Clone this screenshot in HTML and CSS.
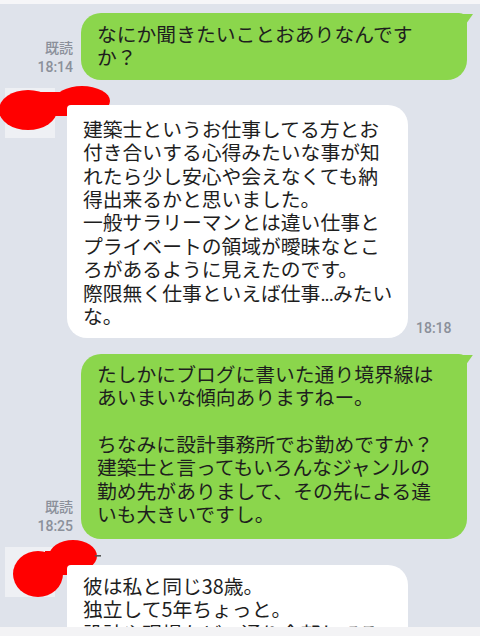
FILE: index.html
```html
<!DOCTYPE html>
<html lang="ja">
<head>
<meta charset="utf-8">
<link rel="stylesheet" href="styles.css">
</head>
<body>
<div class="screen">
  <div class="topbar"></div>
  <div class="chat">
    <div class="row sent first">
      <div class="meta"><span>既読</span><span>18:14</span></div>
      <div class="bubble green">なにか聞きたいことおありなんです<br>か？</div>
    </div>

    <div class="row recv r1">
      <div class="avatar">
        <svg class="scribble s1" width="120" height="54" viewBox="0 0 120 54">
          <ellipse cx="28" cy="26" rx="29" ry="20" fill="#ff0000"/>
          <ellipse cx="82" cy="17" rx="28" ry="15" fill="#ff0000"/>
          <rect x="40" y="8" width="30" height="24" fill="#ff0000"/>
        </svg>
      </div>
      <div class="col">
        <div class="name"></div>
        <div class="line">
          <div class="bubble white b2">建築士というお仕事してる方とお<br>付き合いする心得みたいな事が知<br>れたら少し安心や会えなくても納<br>得出来るかと思いました。<br>一般サラリーマンとは違い仕事と<br>プライベートの領域が曖昧なとこ<br>ろがあるように見えたのです。<br>際限無く仕事といえば仕事<span class="ell">...</span>みたい<br>な。</div>
          <div class="meta left"><span>18:18</span></div>
        </div>
      </div>
    </div>

    <div class="row sent third">
      <div class="meta"><span>既読</span><span>18:25</span></div>
      <div class="bubble green b3">たしかにブログに書いた通り境界線は<br>あいまいな傾向ありますねー。<br><br>ちなみに設計事務所でお勤めですか？<br>建築士と言ってもいろんなジャンルの<br>勤め先がありまして、その先による違<br>いも大きいですし。</div>
    </div>

    <div class="row recv r2">
      <div class="avatar">
        <svg class="scribble s2" width="110" height="64" viewBox="0 0 110 64">
          <ellipse cx="38" cy="37" rx="25" ry="23" fill="#ff0000"/>
          <ellipse cx="73" cy="19" rx="24" ry="16" fill="#ff0000"/>
          <rect x="45" y="14" width="24" height="24" fill="#ff0000"/>
          <rect x="95" y="18" width="6" height="1.6" fill="#555"/>
        </svg>
      </div>
      <div class="col">
        <div class="name"></div>
        <div class="line">
          <div class="bubble white b4">彼は私と同じ38歳。<br>独立して5年ちょっと。<br>設計や現場など一通り全部してる</div>
        </div>
      </div>
    </div>
  </div>
  <div class="inputbar"></div>
</div>
</body>
</html>
```

FILE: styles.css
```css
* { box-sizing: border-box; }
html, body {
  margin: 0;
  padding: 0;
  width: 480px;
  height: 636px;
  overflow: hidden;
  background: #dfe3eb;
}
.screen {
  width: 480px;
  height: 636px;
  overflow: hidden;
  position: relative;
  font-family: "Noto Sans CJK JP", "Noto Sans", sans-serif;
  color: #1e1e1e;
}
.topbar {
  height: 4px;
  background: #f6f6f8;
}
.chat {
  display: flex;
  flex-direction: column;
}
.row { display: flex; }
.sent {
  justify-content: flex-end;
  align-items: flex-end;
  gap: 8px;
  padding-right: 13px;
}
.first { margin-top: 9px; }
.third { margin-top: 16px; }
.r1 { margin-top: 8px; }
.r2 { margin-top: 8px; }

.meta {
  display: flex;
  flex-direction: column;
  align-items: flex-end;
  font-family: Roboto, "Noto Sans CJK JP", sans-serif;
  font-size: 14px;
  line-height: 19px;
  font-weight: 500;
  color: #8b909a;
  padding-bottom: 3px;
}
.meta.left { align-items: flex-start; padding-bottom: 0; }

.bubble {
  font-size: 19.8px;
  line-height: 23.4px;
  padding: 9px 16px 11px 16px;
  border-radius: 20px;
  position: relative;
  white-space: nowrap;
}
.ell {
  font-family: Roboto, sans-serif;
  letter-spacing: -1px;
  line-height: 1;
}
.green {
  background: #8bd64c;
  width: 386px;
  border-top-right-radius: 8px;
}
.green::after {
  content: "";
  position: absolute;
  right: -6px;
  top: 1px;
  width: 14px;
  height: 14px;
  background: #8bd64c;
  clip-path: polygon(0 0, 100% 0, 30% 100%);
}
.b3 { padding: 8px 16px 13px 16px; }

.recv {
  align-items: flex-start;
  gap: 12px;
  padding-left: 5px;
}
.avatar {
  width: 50px;
  height: 50px;
  background: #eef0f4;
  position: relative;
  flex: none;
}
.scribble { position: absolute; }
.s1 { left: -5px; top: -4px; }
.s2 { left: -5px; top: -10px; }
.col {
  display: flex;
  flex-direction: column;
}
.name { height: 17px; }
.r2 .name { height: 18px; }
.line {
  display: flex;
  align-items: flex-end;
  gap: 8px;
}
.white {
  background: #ffffff;
  width: 341px;
  border-top-left-radius: 4px;
}
.b2 { padding: 12px 16px 10px 16px; }
.b4 { padding: 9px 16px 10px 16px; }

.inputbar {
  position: absolute;
  left: 0;
  right: 0;
  bottom: 0;
  height: 9px;
  background: #f3f3f5;
}
```
